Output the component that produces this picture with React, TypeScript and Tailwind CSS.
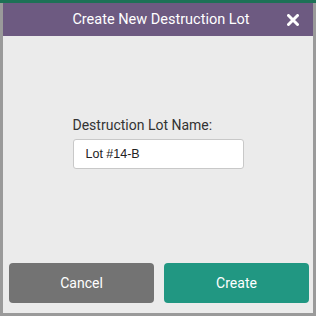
import React from "react";

export default function App() {
  return (
    <div
      className="w-[316px] h-[316px] bg-[#9a9a9a] relative overflow-hidden"
      style={{ fontFamily: "Roboto, 'Liberation Sans', sans-serif" }}
    >
      <div className="h-[3px] bg-[#1d7156]" />
      <div className="ml-[3px] w-[310px] h-[310px] bg-[#ebebeb] flex flex-col">
        <div className="h-[33px] bg-[#6d5a81] flex items-center relative">
          <div className="flex-1 text-center text-white text-[14.5px] pl-[6px]">Create New Destruction Lot</div>
          <svg className="absolute left-[284px] top-[11px]" width="12" height="12" viewBox="0 0 12 12">
            <path d="M1.5 1.5 L10.5 10.5 M10.5 1.5 L1.5 10.5" stroke="white" strokeWidth="3" strokeLinecap="round" />
          </svg>
        </div>
        <div className="flex-1 flex flex-col items-center pt-[79px]">
          <div className="w-[171px]">
            <div className="text-[14px] text-[#333] leading-[20px]">Destruction Lot Name:</div>
            <div
              className="mt-[4px] h-[30px] bg-white border border-[#c8c8c8] rounded-[3px] flex items-center pl-[12px] text-[12.5px] text-[#222]"
              style={{ fontFamily: "'Liberation Sans', Arial, sans-serif" }}
            >
              Lot #14-B
            </div>
          </div>
        </div>
        <div className="flex gap-[10px] pl-[6px] pr-[4px] pb-[10px]">
          <button className="flex-1 h-[40px] rounded-[4px] bg-[#737373] text-white text-[14px]">Cancel</button>
          <button className="flex-1 h-[40px] rounded-[4px] bg-[#219782] text-white text-[14px]">Create</button>
        </div>
      </div>
    </div>
  );
}
